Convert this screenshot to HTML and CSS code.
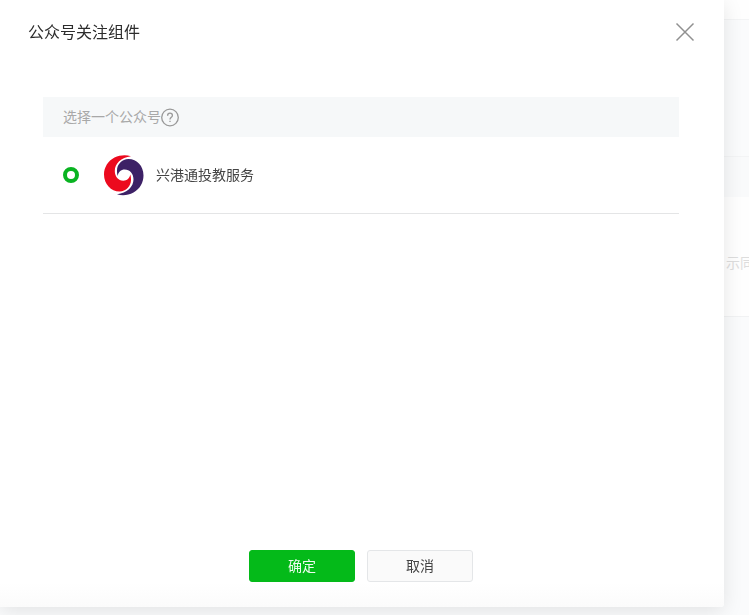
FILE: index.html
```html
<!DOCTYPE html>
<html lang="zh-CN">
<head>
<meta charset="utf-8">
<meta name="viewport" content="width=device-width, initial-scale=1">
<title>公众号关注组件</title>
<link rel="stylesheet" href="styles.css">
</head>
<body>
<div class="page" aria-hidden="true">
  <div class="page-bar"></div>
  <div class="page-gap"></div>
  <div class="page-head"></div>
  <div class="page-row"><span class="page-text">示同</span></div>
</div>
<form class="dialog" role="dialog" aria-labelledby="dialog-title">
  <header class="dialog-header">
    <h1 class="dialog-title" id="dialog-title">公众号关注组件</h1>
    <button class="close" type="button" aria-label="关闭">
      <svg class="close-icon" viewBox="0 0 20 20"><path d="M1.5 1.5l17 17M18.5 1.5l-17 17"/></svg>
    </button>
  </header>
  <fieldset class="accounts">
    <legend class="accounts-head">
      <span class="label">选择一个公众号</span>
      <svg class="help-icon" viewBox="0 0 18 18"><circle cx="9" cy="9.500" r="8.300"/><path d="M6.600 7.700C6.600 6.100 7.600 5.200 9 5.200s2.400.9 2.400 2.200c0 1.800-2.400 2-2.400 4.100"/><path d="M9 12.800v1.300"/></svg>
    </legend>
    <label class="account">
      <input class="radio" type="radio" name="account" checked>
      <svg class="logo" viewBox="0 0 40 40">
        <path class="logo-red" d="M27 1.200C22-.5 16-.2 10.500 2.600C4 6 0 12.500 0 19.500C0 29 7 36.500 15.500 36.500C22 36.500 27 31 27 25C27 22.500 26.800 21 26.200 19.500C25.800 23 23 25.700 19.300 25.700C14.300 25.700 10.800 21.500 10.800 16C10.800 8.500 17 2.500 27 1.200Z"/>
        <path class="logo-blue" d="M13 39.200C18 41 24 40.500 29.500 37.500C36 34 39.500 27.500 39.500 20.500C39.500 11 33 4 24.500 4C18 4 13 9.300 13 15.500C13 18 13.200 19.500 13.800 21C14.200 17.300 17 14.600 20.700 14.600C25.700 14.600 29.500 18.800 29.500 24.300C29.500 32 23 38.200 13 39.200Z"/>
      </svg>
      <span class="label">兴港通投教服务</span>
    </label>
  </fieldset>
  <footer class="dialog-footer">
    <button class="btn btn-primary" type="submit">确定</button>
    <button class="btn btn-default" type="button">取消</button>
  </footer>
</form>
</body>
</html>
```
FILE: styles.css
```css
* {
  box-sizing: border-box;
}

body {
  margin: 0;
  min-height: 100vh;
  overflow: hidden;
  background: #fafbfc;
  color: #444444;
  font: 14px/20px "Noto Sans CJK SC", sans-serif;
}

.page-bar {
  height: 20px;
  background: #fefefe;
  border-bottom: 1px solid #f3f4f5;
}

.page-gap {
  height: 136px;
}

.page-head {
  height: 41px;
  border-top: 1px solid #f3f4f5;
  background: #f9fafb;
}

.page-row {
  display: flex;
  align-items: center;
  justify-content: flex-end;
  height: 120px;
  padding-top: 10px;
  border-bottom: 1px solid #f1f2f3;
  background: #fefefe;
}

.page-text {
  width: 23px;
  color: #dddddd;
  white-space: nowrap;
}

.dialog {
  position: fixed;
  inset: 0 25px 8px 0;
  display: flex;
  flex-direction: column;
  background: linear-gradient(to top, #fbfbfb, #ffffff 24px);
  border-bottom-right-radius: 3px;
  box-shadow: 0 4px 20px rgba(0, 0, 0, 0.1);
}

.dialog-header {
  display: flex;
  align-items: center;
  justify-content: space-between;
  height: 64px;
  padding: 0 29px 0 28px;
}

.dialog-title {
  margin: 0;
  padding-bottom: 2px;
  color: #2c2c2c;
  font-size: 16px;
  font-weight: 400;
  line-height: 24px;
}

.label {
  padding-bottom: 2px;
}

.close {
  display: flex;
  padding: 0;
  border: 0;
  background: none;
}

.close-icon {
  width: 20px;
  height: 20px;
  fill: none;
  stroke: #909090;
  stroke-width: 1.5;
}

.accounts {
  flex: 1;
  min-width: 0;
  margin: 33px 45px 0 43px;
  padding: 0;
  border: 0;
}

.accounts-head {
  display: flex;
  align-items: center;
  width: 100%;
  height: 40px;
  padding: 0 20px;
  background: #f6f8f9;
  color: #a8a8a8;
}

.help-icon {
  width: 18px;
  height: 18px;
  overflow: visible;
  fill: none;
  stroke: #999999;
  stroke-width: 1.3;
}

.account {
  display: flex;
  align-items: center;
  height: 77px;
  padding: 0 20px;
  border-bottom: 1px solid #e4e5e6;
}

.radio {
  appearance: none;
  width: 16px;
  height: 16px;
  margin: 0 25px 0 0;
  border: 4px solid #09b321;
  border-radius: 50%;
  background: #ffffff;
}

.logo {
  width: 40px;
  height: 40px;
  margin-right: 12px;
  overflow: visible;
}

.logo-red {
  fill: #ec0a1e;
}

.logo-blue {
  fill: #3d2166;
}

.dialog-footer {
  display: flex;
  justify-content: center;
  gap: 12px;
  padding: 0 2px 25px 0;
}

.btn {
  width: 106px;
  height: 32px;
  padding: 0 0 2px;
  border: 1px solid;
  border-radius: 3px;
  font: inherit;
}

.btn-primary {
  border-color: #04ba19;
  background: #04ba19;
  color: #eefbf0;
}

.btn-default {
  border-color: #e4e6e8;
  background: #fafafa;
  color: #444444;
}
```
